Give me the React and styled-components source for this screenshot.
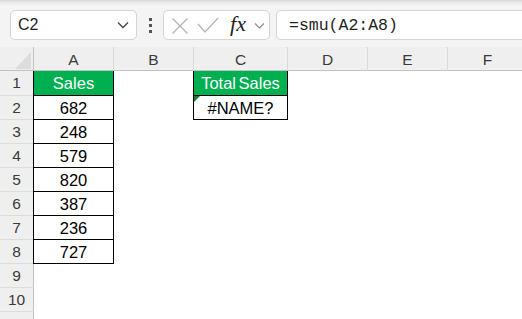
import React from 'react';
import styled, { createGlobalStyle } from 'styled-components';

const GlobalStyle = createGlobalStyle`
  html, body {
    margin: 0;
    padding: 0;
    background: #f3f3f3;
  }
  * { box-sizing: border-box; }
`;

const COLUMNS = [
  { name: 'A', width: 80 },
  { name: 'B', width: 80 },
  { name: 'C', width: 94 },
  { name: 'D', width: 80 },
  { name: 'E', width: 80 },
  { name: 'F', width: 80 },
];

const ROWS = [
  { A: 'Sales', C: 'Total Sales', header: true },
  { A: '682', C: '#NAME?', error: true },
  { A: '248' },
  { A: '579' },
  { A: '820' },
  { A: '387' },
  { A: '236' },
  { A: '727' },
  {},
  {},
  {},
];

const App = () => {
  return (
    <Screen>
      <GlobalStyle />
      <Toolbar>
        <NameBox>
          <NameText>C2</NameText>
          <svg width="12" height="8" viewBox="0 0 12 8">
            <polyline points="1,1.5 6,6.5 11,1.5" fill="none" stroke="#444" strokeWidth="1.3" />
          </svg>
        </NameBox>
        <Dots>
          <Dot />
          <Dot />
          <Dot />
        </Dots>
        <FxBox>
          <svg width="18" height="18" viewBox="0 0 18 18">
            <line x1="1.5" y1="1.5" x2="16.5" y2="16.5" stroke="#b4b4b4" strokeWidth="1.2" />
            <line x1="16.5" y1="1.5" x2="1.5" y2="16.5" stroke="#b4b4b4" strokeWidth="1.2" />
          </svg>
          <svg width="22" height="18" viewBox="0 0 22 18">
            <polyline points="1,8 8,16 21,2" fill="none" stroke="#b4b4b4" strokeWidth="1.2" />
          </svg>
          <FxLabel>fx</FxLabel>
          <svg width="11" height="7" viewBox="0 0 11 7">
            <polyline points="1,1.5 5.5,6 10,1.5" fill="none" stroke="#8a8a8a" strokeWidth="1.1" />
          </svg>
        </FxBox>
        <FormulaBox>=smu(A2:A8)</FormulaBox>
      </Toolbar>

      <Sheet>
        <Corner>
          <svg width="16" height="17" viewBox="0 0 16 17">
            <polygon points="16,0 16,17 0,17" fill="#dcdcdc" />
          </svg>
        </Corner>
        {COLUMNS.map((c) => (
          <ColHeader key={c.name}>{c.name}</ColHeader>
        ))}

        {ROWS.map((row, i) => (
          <React.Fragment key={i}>
            <RowHeader $first={i === 0}>{i + 1}</RowHeader>
            {COLUMNS.map((c) => {
              const inA = c.name === 'A' && i < 8;
              const inC = c.name === 'C' && i < 2;
              const boxed = inA || inC;
              return (
                <Cell key={c.name} $boxed={boxed} $fill={boxed && row.header}>
                  {row[c.name]}
                  {c.name === 'C' && row.error && <ErrorFlag />}
                </Cell>
              );
            })}
          </React.Fragment>
        ))}
      </Sheet>
    </Screen>
  );
};

export default App;

const Screen = styled.div`
  width: 522px;
  height: 319px;
  overflow: hidden;
  background: #f3f3f3;
  font-family: "Liberation Sans", Arial, sans-serif;
`;

const Toolbar = styled.div`
  display: flex;
  align-items: center;
  height: 47px;
  padding: 10px 0 7px 10px;
  background: linear-gradient(to bottom, #d6d6d6 0px, #ececec 3px, #f4f4f4 6px, #f4f4f4 100%);
`;

const Box = styled.div`
  height: 30px;
  background: #fff;
  border: 1px solid #d4d4d4;
  border-radius: 5px;
  display: flex;
  align-items: center;
  flex-shrink: 0;
`;

const NameBox = styled(Box)`
  width: 127px;
  padding: 0 7px 0 7px;
  justify-content: space-between;
`;

const NameText = styled.span`
  font-size: 16px;
  color: #1f1f1f;
`;

const Dots = styled.div`
  width: 26px;
  flex-shrink: 0;
  display: flex;
  flex-direction: column;
  align-items: center;
  gap: 3px;
  padding-left: 1px;
`;

const Dot = styled.span`
  width: 3px;
  height: 3px;
  background: #555;
`;

const FxBox = styled(Box)`
  width: 107px;
  padding: 0 4px 0 7px;
  justify-content: space-between;

  svg:nth-child(1) { margin-top: 1px; }
`;

const FxLabel = styled.span`
  font-family: "Liberation Serif", "Times New Roman", serif;
  font-style: italic;
  font-size: 22px;
  color: #222;
  margin-top: -2px;
  margin-left: 3px;
`;

const FormulaBox = styled(Box)`
  margin-left: 6px;
  width: 270px;
  padding-left: 12px;
  font-family: "Liberation Mono", "Courier New", monospace;
  font-size: 16.5px;
  color: #1f1f1f;
`;

const Sheet = styled.div`
  display: grid;
  grid-template-columns: 34px ${COLUMNS.map((c) => `${c.width}px`).join(' ')};
  grid-template-rows: 24px 25px repeat(10, 24px);
  background: #fff;
  font-size: 16.5px;
`;

const HeaderBase = styled.div`
  background: #efefef;
  display: flex;
  align-items: center;
  justify-content: center;
  font-family: "Liberation Sans", Arial, sans-serif;
  font-size: 15.5px;
  color: #3a3a3a;
`;

const Corner = styled(HeaderBase)`
  border-right: 1px solid #c2c2c2;
  border-bottom: 1px solid #c2c2c2;
  justify-content: flex-start;
  align-items: flex-end;
  padding: 0 0 1px 15px;
`;

const ColHeader = styled(HeaderBase)`
  border-right: 1px solid #dadada;
  border-bottom: 1px solid #c2c2c2;
  padding-top: 2px;
`;

const RowHeader = styled(HeaderBase)`
  border-right: 1px solid #c2c2c2;
  border-bottom: 1px solid #dcdcdc;
  padding-top: ${(p) => (p.$first ? '0' : '1px')};
`;

const Cell = styled.div`
  position: relative;
  display: flex;
  align-items: center;
  justify-content: center;
  color: ${(p) => (p.$fill ? '#fff' : '#000')};
  background: ${(p) => (p.$fill ? '#00b050' : '#fff')};
  border-right: 1px solid ${(p) => (p.$boxed ? '#000' : 'transparent')};
  border-bottom: 1px solid ${(p) => (p.$boxed ? '#000' : 'transparent')};
  box-shadow: ${(p) => (p.$boxed ? '-1px 0 0 #000' : 'none')};
  white-space: nowrap;
  word-spacing: ${(p) => (p.$fill ? '-2px' : '0')};
  padding-top: 1px;
`;

const ErrorFlag = styled.span`
  position: absolute;
  top: 0;
  left: 0;
  width: 0;
  height: 0;
  border-top: 6px solid #1f7a36;
  border-right: 6px solid transparent;
`;
